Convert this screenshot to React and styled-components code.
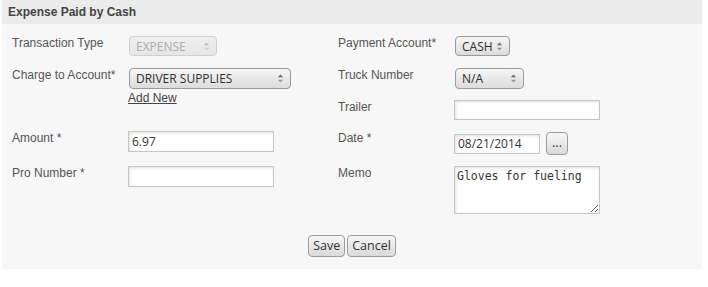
import React from "react";
import styled, { createGlobalStyle } from "styled-components";

const GlobalStyle = createGlobalStyle`
  html, body { margin: 0; padding: 0; background: #ffffff; }
  body { font-family: "Liberation Sans", Arial, sans-serif; }
`;

const Panel = styled.section`
  width: 700px;
  margin-left: 2px;
  background: #f7f7f7;
  padding-bottom: 12px;
`;

const Header = styled.h2`
  margin: 0;
  height: 24px;
  line-height: 24px;
  padding: 0 6px;
  background: #ebebeb;
  color: #444;
  font: bold 12px/24px "Liberation Sans", Arial, sans-serif;
`;

const Form = styled.div`
  display: grid;
  grid-template-columns: 116px 210px 116px 1fr;
  grid-template-rows: 32px 32px 31px 35px 48px;
  padding: 12px 0 0 10px;
`;

const Label = styled.div`
  grid-column: ${(p) => p.$col || "auto"};
  font: 12px/15px "Liberation Sans", Arial, sans-serif;
  color: #555;
`;

const Cell = styled.div`
  grid-column: ${(p) => p.$col || "auto"};
  align-self: start;
  display: flex;
  flex-direction: ${(p) => (p.$row ? "row" : "column")};
  align-items: ${(p) => (p.$row ? "center" : "flex-start")};
  gap: ${(p) => (p.$row ? "6px" : "0")};
  margin-top: ${(p) => p.$offset || 0}px;
`;

const SelectBox = styled.div`
  box-sizing: border-box;
  width: ${(p) => p.$w}px;
  height: ${(p) => p.$h || 20}px;
  display: flex;
  align-items: center;
  justify-content: space-between;
  padding: 0 6px 0 6px;
  border: 1px solid ${(p) => (p.$disabled ? "#cfcfcf" : "#9a9a9a")};
  border-radius: 4px;
  background: ${(p) =>
    p.$disabled
      ? "linear-gradient(#efefef, #e6e6e6)"
      : "linear-gradient(#f6f6f6, #dcdcdc)"};
  color: ${(p) => (p.$disabled ? "#adadad" : "#2f2f2f")};
  font: 12px "Open Sans", "DejaVu Sans", sans-serif;
  white-space: nowrap;
  margin-left: 1px;
`;

const Arrows = ({ faded }) => (
  <svg width="7" height="11" viewBox="0 0 7 11">
    <path d="M0.8 4.3 L3.5 1.4 L6.2 4.3 Z" fill={faded ? "#bdbdbd" : "#6a6a6a"} />
    <path d="M0.8 6.7 L3.5 9.6 L6.2 6.7 Z" fill={faded ? "#cdcdcd" : "#9a9a9a"} />
  </svg>
);

const Select = ({ value, width, height, disabled }) => (
  <SelectBox $w={width} $h={height} $disabled={disabled}>
    <span>{value}</span>
    <Arrows faded={disabled} />
  </SelectBox>
);

const TextInput = styled.input`
  box-sizing: border-box;
  width: ${(p) => p.$w}px;
  height: ${(p) => p.$h || 21}px;
  margin: 0;
  padding: 0 3px;
  border: 1px solid #c6c6c6;
  background: #fff;
  box-shadow: inset 1px 1px 3px rgba(0, 0, 0, 0.12);
  color: #333;
  font: 12px "Open Sans", "DejaVu Sans", sans-serif;
  outline: none;
`;

const Memo = styled.textarea`
  box-sizing: border-box;
  width: 146px;
  height: 48px;
  margin: 0;
  padding: 2px 2px;
  border: 1px solid #c6c6c6;
  background: #fff;
  box-shadow: inset 1px 1px 3px rgba(0, 0, 0, 0.12);
  color: #333;
  font: 11.5px/15px "DejaVu Sans Mono", "Liberation Mono", monospace;
  resize: both;
  outline: none;
`;

const LinkText = styled.a`
  margin-top: 2px;
  color: #444;
  text-decoration: underline;
  font: 12px/15px "Liberation Sans", Arial, sans-serif;
  cursor: pointer;
`;

const Button = styled.button`
  box-sizing: border-box;
  height: ${(p) => p.$h || 22}px;
  min-width: ${(p) => p.$w || 0}px;
  margin: 0;
  padding: 0 4px;
  border: 1px solid #9c9c9c;
  border-radius: 4px;
  background: linear-gradient(#f7f7f7, #d9d9d9);
  color: #333;
  font: 12.5px "Open Sans", "DejaVu Sans", sans-serif;
  line-height: 1;
  cursor: pointer;
`;

const Actions = styled.div`
  display: flex;
  justify-content: center;
  gap: 2px;
  margin-top: 21px;
`;

export default function App() {
  return (
    <>
      <GlobalStyle />
      <Panel>
        <Header>Expense Paid by Cash</Header>
        <Form>
          <Label>Transaction Type</Label>
          <Cell>
            <Select value="EXPENSE" width={88} disabled />
          </Cell>
          <Label>Payment Account*</Label>
          <Cell>
            <Select value="CASH" width={55} />
          </Cell>

          <Label>Charge to Account*</Label>
          <Cell>
            <Select value="DRIVER SUPPLIES" width={162} height={21} />
            <LinkText>Add New</LinkText>
          </Cell>
          <Label>Truck Number</Label>
          <Cell>
            <Select value="N/A" width={69} height={21} />
          </Cell>

          <Label $col={3}>Trailer</Label>
          <Cell>
            <TextInput $w={146} $h={20} defaultValue="" />
          </Cell>

          <Label>Amount *</Label>
          <Cell>
            <TextInput $w={146} defaultValue="6.97" />
          </Cell>
          <Label>Date *</Label>
          <Cell $row $offset={1}>
            <TextInput $w={86} $h={20} defaultValue="08/21/2014" />
            <Button $h={23} $w={22}>...</Button>
          </Cell>

          <Label>Pro Number *</Label>
          <Cell>
            <TextInput $w={146} defaultValue="" />
          </Cell>
          <Label>Memo</Label>
          <Cell>
            <Memo defaultValue="Gloves for fueling" />
          </Cell>
        </Form>
        <Actions>
          <Button>Save</Button>
          <Button>Cancel</Button>
        </Actions>
      </Panel>
    </>
  );
}
